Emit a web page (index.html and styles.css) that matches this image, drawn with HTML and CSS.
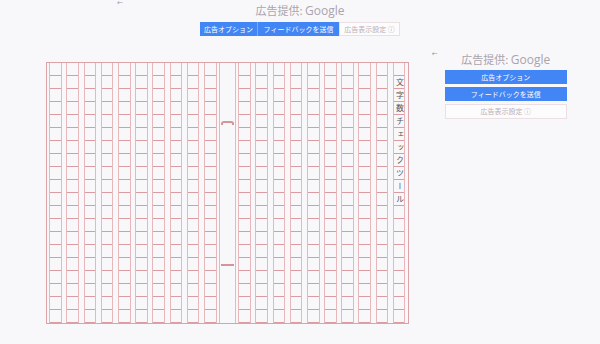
FILE: index.html
```html
<html>
  <head>
    <meta http-equiv="content-type" content="text/html; charset=utf-8" />
    <link rel="stylesheet" href="styles.css">
  </head>
  <body>
    <div class="top-ad">
      <span class="back-arrow arrow-top">←</span>
      <div class="ad-title">広告提供: <span class="g">Google</span></div>
      <div class="ad-buttons">
        <span class="btn b-opt">広告オプション</span>
        <span class="btn b-fb">フィードバックを送信</span>
        <span class="btn btn-light b-set">広告表示設定 ⓘ</span>
      </div>
    </div>
    <div class="main">
      <div class="paper">
        <div class="half">
          <div class="col"><div class="cells"></div></div>
          <div class="col"><div class="cells"></div></div>
          <div class="col"><div class="cells"></div></div>
          <div class="col"><div class="cells"></div></div>
          <div class="col"><div class="cells"></div></div>
          <div class="col"><div class="cells"></div></div>
          <div class="col"><div class="cells"></div></div>
          <div class="col"><div class="cells"></div></div>
          <div class="col"><div class="cells"></div></div>
          <div class="col"><div class="cells"></div></div>
        </div>
        <div class="fold">
          <div class="mark-top"></div>
          <div class="mark-bottom"></div>
        </div>
        <div class="half">
          <div class="col"><div class="cells"></div></div>
          <div class="col"><div class="cells"></div></div>
          <div class="col"><div class="cells"></div></div>
          <div class="col"><div class="cells"></div></div>
          <div class="col"><div class="cells"></div></div>
          <div class="col"><div class="cells"></div></div>
          <div class="col"><div class="cells"></div></div>
          <div class="col"><div class="cells"></div></div>
          <div class="col"><div class="cells"></div></div>
          <div class="col"><div class="cells"><div class="vtext">文字数チェックツール</div></div></div>
        </div>
      </div>
      <div class="side-ad">
        <span class="back-arrow arrow-side">←</span>
        <div class="ad-title">広告提供: <span class="g">Google</span></div>
        <div class="side-buttons">
          <span class="btn">広告オプション</span>
          <span class="btn">フィードバックを送信</span>
          <span class="btn btn-light">広告表示設定 ⓘ</span>
        </div>
      </div>
    </div>
  </body>
</html>
```

FILE: styles.css
```css
body {
  margin: 0;
  padding: 0;
  width: 600px;
  height: 344px;
  overflow: hidden;
  background: #f8f8fb;
  font-family: "Noto Sans CJK JP", sans-serif;
}
.top-ad {
  position: relative;
  box-sizing: border-box;
  height: 50px;
  padding-top: 3px;
  text-align: center;
}
.back-arrow {
  position: absolute;
  font-family: "DejaVu Sans", sans-serif;
  font-size: 7px;
  line-height: 7px;
  color: #9a96a0;
}
.arrow-top {
  left: 117px;
  top: 0;
}
.arrow-side {
  left: -13px;
  top: 1px;
}
.ad-title {
  font-size: 11px;
  line-height: 14px;
  color: #aaa3ab;
}
.ad-title .g {
  font-family: "Open Sans", sans-serif;
  font-size: 12px;
}
.ad-buttons {
  display: flex;
  justify-content: center;
  margin-top: 4px;
}
.btn {
  display: block;
  box-sizing: border-box;
  height: 14px;
  line-height: 14px;
  font-size: 7px;
  color: #fff;
  background: #4285f4;
  text-align: center;
  white-space: nowrap;
}
.btn-light {
  background: #fdfcfd;
  color: #b8b0b8;
  border: 1px solid #ecdfe3;
  line-height: 12px;
}
.b-opt {
  width: 58px;
  border-right: 1px solid #7fa9f2;
}
.b-fb {
  width: 81px;
}
.b-set {
  width: 61px;
}
.main {
  display: flex;
  align-items: flex-start;
  padding-left: 46px;
}
.paper {
  display: flex;
  margin-top: 11.5px;
  border: 1.5px solid #dba3a8;
}
.half {
  display: flex;
}
.col {
  box-sizing: border-box;
  width: 17.2px;
  height: 260px;
  padding: 0 2.3px;
}
.cells {
  box-sizing: border-box;
  height: 100%;
  border-left: 1px solid #e6b8bb;
  border-right: 1px solid #e6b8bb;
  background: linear-gradient(to bottom, transparent 11px, #da9ca1 11px, #da9ca1 12px, transparent 12px) 0 1px / 100% 13px repeat-y;
}
.fold {
  box-sizing: border-box;
  display: flex;
  flex-direction: column;
  width: 17px;
  height: 260px;
  border-left: 1px solid #e6b8bb;
  border-right: 1px solid #e6b8bb;
}
.mark-top {
  box-sizing: border-box;
  width: 13px;
  height: 4px;
  margin: 58px auto 0;
  border: 2px solid #d69398;
  border-bottom: none;
  border-radius: 3px 3px 0 0;
}
.mark-bottom {
  width: 13px;
  height: 2px;
  margin: auto auto 57px;
  background: #d69398;
}
.vtext {
  box-sizing: border-box;
  writing-mode: vertical-rl;
  height: 100%;
  padding-top: 15.5px;
  font-size: 8px;
  line-height: 10.6px;
  letter-spacing: 5px;
  color: #555;
}
.side-ad {
  position: relative;
  width: 122px;
  margin-left: 36px;
  padding-top: 2px;
  text-align: center;
}
.side-buttons {
  display: flex;
  flex-direction: column;
  gap: 3px;
  margin-top: 3px;
}
.side-buttons .btn-light {
  height: 15px;
}
```
